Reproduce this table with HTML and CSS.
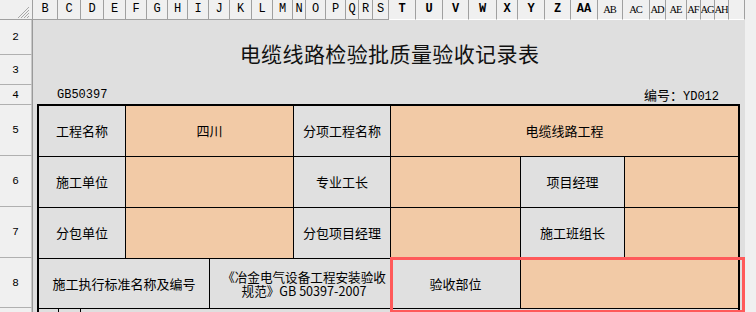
FILE: index.html
```html
<!DOCTYPE html>
<html lang="zh">
<head>
<meta charset="utf-8">
<title>电缆线路检验批质量验收记录表</title>
<link rel="stylesheet" href="styles.css">
</head>
<body>
<div class="app">
  <div class="colhead">
    <div class="corner">
      <svg width="14" height="12" viewBox="0 0 14 12"><path d="M13 1 L2 12 M13 4 L5 12 M13 7 L8 12 M13 10 L11 12" stroke="#a8a8a8" stroke-width="1" fill="none"/></svg>
    </div>
    <div class="ch">B</div><div class="ch">C</div><div class="ch">D</div><div class="ch">E</div><div class="ch">F</div><div class="ch">G</div><div class="ch">H</div><div class="ch">I</div><div class="ch">J</div><div class="ch">K</div><div class="ch">L</div><div class="ch">M</div><div class="ch">N</div><div class="ch">O</div><div class="ch">P</div><div class="ch">Q</div><div class="ch">R</div><div class="ch">S</div>
    <div class="ch b">T</div><div class="ch b">U</div><div class="ch b">V</div><div class="ch b">W</div><div class="ch b">X</div><div class="ch b">Y</div><div class="ch b">Z</div><div class="ch b">AA</div>
    <div class="ch n">AB</div><div class="ch n">AC</div><div class="ch n">AD</div><div class="ch n">AE</div><div class="ch n">AF</div><div class="ch n">AG</div><div class="ch n">AH</div><div class="ch n"></div>
  </div>
  <div class="main">
    <div class="rowhead">
      <div class="rh">2</div><div class="rh">3</div><div class="rh">4</div><div class="rh">5</div><div class="rh">6</div><div class="rh">7</div><div class="rh">8</div><div class="rh"></div>
    </div>
    <div class="sheet">
      <div class="title">电缆线路检验批质量验收记录表</div>
      <div class="subrow"><span class="mono">GB50397</span><span class="code">编号：<span class="mono">YD012</span></span></div>
      <div class="table">
        <div class="cell lbl">工程名称</div>
        <div class="cell val span2">四川</div>
        <div class="cell lbl">分项工程名称</div>
        <div class="cell val span3">电缆线路工程</div>

        <div class="cell lbl">施工单位</div>
        <div class="cell val span2"></div>
        <div class="cell lbl">专业工长</div>
        <div class="cell val"></div>
        <div class="cell lbl">项目经理</div>
        <div class="cell val"></div>

        <div class="cell lbl">分包单位</div>
        <div class="cell val span2"></div>
        <div class="cell lbl">分包项目经理</div>
        <div class="cell val"></div>
        <div class="cell lbl">施工班组长</div>
        <div class="cell val"></div>

        <div class="cell lbl span2">施工执行标准名称及编号</div>
        <div class="cell lbl span2 std">《冶金电气设备工程安装验收<br>规范》GB 50397-2007</div>
        <div class="cell lbl">验收部位</div>
        <div class="cell val span2"></div>

        <div class="row9"><div class="r9a"></div><div class="r9b"></div><div class="r9c"></div></div>
      </div>
      <div class="highlight"></div>
    </div>
  </div>
</div>
</body>
</html>
```
FILE: styles.css
```css
html, body {
  margin: 0;
  padding: 0;
  background: #f0f0f0;
  overflow: hidden;
}
.app {
  width: 756px;
  height: 312px;
  overflow: hidden;
  font-family: "Noto Sans CJK SC", sans-serif;
}
.colhead {
  display: grid;
  grid-template-columns: 33px 25px 23px 23px 22px 21px 21px 20px 21px 21px 22px 21px 20px 13px 20px 20px 13px 14px 16px 27px 27px 26px 28px 21px 27px 26px 27px 25px 27px 16px 21px 14px 14px 14px 16px;
  height: 20px;
  background: #f0f0f0;
}
.corner {
  border-right: 1px solid #a0a0a0;
  border-bottom: 1px solid #a0a0a0;
  display: flex;
  justify-content: flex-end;
  align-items: flex-end;
  box-sizing: border-box;
  padding: 0 2px 1px 0;
}
.ch {
  box-sizing: border-box;
  border-right: 1px solid #a0a0a0;
  border-bottom: 1px solid #a0a0a0;
  font-family: "Liberation Mono", monospace;
  font-size: 12px;
  line-height: 19px;
  text-align: center;
  color: #000;
  overflow: hidden;
  white-space: nowrap;
}
.ch.b {
  font-weight: bold;
  border-bottom-color: #ffffff;
}
.ch.n {
  font-family: "Liberation Serif", serif;
  font-size: 10.5px;
  letter-spacing: -1px;
  text-indent: -1px;
  border-bottom-color: #ffffff;
}
.main {
  display: flex;
}
.rowhead {
  width: 33px;
  display: grid;
  grid-template-rows: 35px 30px 20px 51px 51px 51px 50px 40px;
  box-sizing: border-box;
  border-right: 1px solid #9a9a9a;
  background: #f0f0f0;
}
.rh {
  box-sizing: border-box;
  border-bottom: 1px solid #b0b0b0;
  border-right: 1px solid #c8c8c8;
  font-family: "Liberation Mono", monospace;
  font-size: 11px;
  display: flex;
  align-items: center;
  justify-content: center;
  color: #000;
}
.sheet {
  position: relative;
  width: 712px;
  height: 292px;
  background: #dfdfdf;
}
.title {
  height: 65px;
  display: flex;
  align-items: center;
  justify-content: center;
  padding-left: 1px;
  font-size: 21px;
  color: #111;
  letter-spacing: 0.4px;
}
.subrow {
  height: 19px;
  display: flex;
  justify-content: space-between;
  align-items: center;
  padding: 0 26px 0 24px;
  font-size: 12px;
  color: #000;
}
.mono {
  font-family: "Liberation Mono", monospace;
  font-size: 12px;
}
.code {
  font-size: 13px;
}
.table {
  margin-left: 4px;
  width: 703px;
  box-sizing: border-box;
  border: 2px solid #000;
  border-bottom: none;
  background: #000;
  display: grid;
  grid-template-columns: 86px 83px 83px 96px 129px 103px 113px;
  grid-template-rows: 50px 50px 50px 49px 30px;
  gap: 1px;
}
.cell {
  display: flex;
  align-items: center;
  justify-content: center;
  text-align: center;
  font-size: 13px;
  color: #000;
  line-height: 16px;
}
.lbl { background: #e0e0e0; }
.val { background: #f2caa6; }
.span2 { grid-column: span 2; }
.span3 { grid-column: span 3; }
.std {
  padding: 0 0 0 8px;
  line-height: 14px;
  white-space: nowrap;
  font-size: 12.6px;
}
.row9 {
  grid-column: 1 / -1;
  display: flex;
  gap: 1px;
  background: #000;
}
.r9a { width: 19px; background: #dfdfdf; }
.r9b { width: 21px; background: #dfdfdf; }
.r9c { flex: 1; background: #dfdfdf; }
.highlight {
  position: absolute;
  left: 357px;
  top: 237px;
  width: 355px;
  height: 56px;
  box-sizing: border-box;
  border: 3px solid #ff5a5a;
}
```
